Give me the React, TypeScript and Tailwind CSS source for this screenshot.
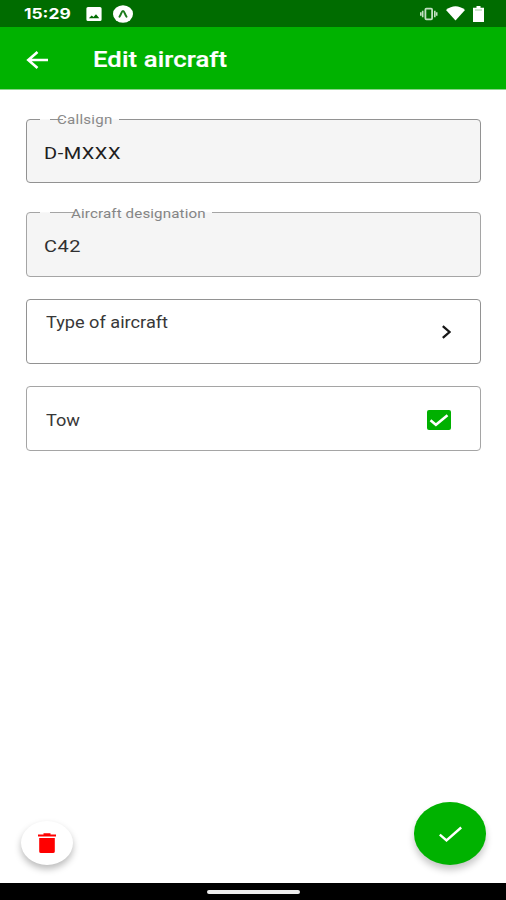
function StatusBar() {
  return (
    <div className="flex h-[27px] shrink-0 items-center justify-between bg-[#006c00] pl-6 pr-[21px] text-white">
      <div className="flex items-center">
        <span className="w-[70px]">
          <span className="inline-block origin-left scale-x-[1.2] font-['Inter',sans-serif] text-[14.5px] leading-[27px] font-bold">15:29</span>
        </span>
        <svg className="ml-[-8px] h-[14px] w-4" viewBox="0 0 16 14">
          <path fillRule="evenodd" d="M2 0h12q1.600 0 1.600 1.500v11q0 1.500-1.600 1.500H2Q.4 14 .4 12.500v-11Q.4 0 2 0M2.800 11.200h10.500L10 7.300 7.500 9.900 5.700 8.400z" fill="currentColor" />
        </svg>
        <svg className="ml-[11px] h-[18px] w-5" viewBox="0 0 20 18">
          <ellipse cx="10" cy="9" rx="10" ry="8.700" fill="currentColor" />
          <path d="M6.500 11.700C8 10 8.600 6 10 6s2 4 3.500 5.700" fill="none" stroke="#1c7a1c" strokeWidth="2" strokeLinecap="round" />
        </svg>
      </div>
      <div className="flex items-center">
        <svg className="h-[14px] w-[19px]" viewBox="0 0 19 14" fill="none" stroke="#c2e0c2">
          <rect x="5.400" y="1.700" width="6.700" height="10.600" rx="1" strokeWidth="1.800" />
          <path d="M2.700 3.800v6.400M.8 5.200v3.600M14.800 3.800v6.400M16.700 5.200v3.600" strokeWidth="1.600" />
        </svg>
        <svg className="ml-[7px] h-[15px] w-[19px]" viewBox="0 0 19 15">
          <path d="M0 4Q9.500-3.500 19 4L9.500 14.500z" fill="currentColor" />
        </svg>
        <svg className="ml-2 mr-px h-4 w-[11px]" viewBox="0 0 11 16">
          <path d="M3.500 0h4v1.800H11V16H0V1.800h3.500z" fill="currentColor" />
          <path d="M2 4h7" stroke="#9bcb9b" />
        </svg>
      </div>
    </div>
  );
}

function Header() {
  return (
    <header className="flex h-[63px] shrink-0 items-center border-b border-[#8bd48b] bg-[#00b200] pl-[26px] pt-[3px] text-white">
      <svg className="h-[18px] w-[22px]" viewBox="0 0 22 18" fill="none" stroke="currentColor" strokeWidth="2.600">
        <path d="M22 9H2.500M11.500 1 2.300 9l9.200 8" />
      </svg>
      <h1 className="-mt-px ml-[45px] origin-left scale-x-[1.165] text-[22px] font-medium tracking-[0.100px] [-webkit-text-stroke:0.200px_white]">Edit aircraft</h1>
    </header>
  );
}

export default function App() {
  return (
    <div className="flex h-[900px] w-[506px] flex-col overflow-hidden bg-white font-['Roboto',sans-serif]">
      <StatusBar />
      <Header />
      <main className="flex flex-1 flex-col pl-[26px] pr-[25px] pt-[28.500px]">
        <section className="relative h-[64px] rounded-[4px] border border-[#929292] bg-[#f5f5f5] pl-[17px] pt-[19px]">
          <span className="absolute -top-px left-[13px] h-px w-[10px] bg-[#f8f8f8]" />
          <span className="absolute -top-px left-[36px] h-px w-[56px] bg-[#f8f8f8]" />
          <span className="absolute -top-[9px] left-[30px] origin-left scale-x-[1.16] text-[13px] leading-[18px] tracking-[0.200px] text-[#8a8a8a]">Callsign</span>
          <p className="w-fit origin-left scale-x-[1.175] text-[17px] leading-7 tracking-[0.450px] text-[#202020]">D-MXXX</p>
        </section>
        <section className="relative mt-[29.500px] h-[65px] rounded-[4px] border border-[#a5a5a5] bg-[#f5f5f5] pl-[17px] pt-[19px]">
          <span className="absolute -top-px left-[13px] h-px w-[10px] bg-[#f8f8f8]" />
          <span className="absolute -top-px left-[47px] h-px w-[138px] bg-[#f8f8f8]" />
          <span className="absolute -top-[8px] left-[44px] origin-left scale-x-[1.165] whitespace-nowrap text-[13px] leading-[18px] tracking-[0.100px] text-[#858585]">Aircraft designation</span>
          <p className="w-fit origin-left scale-x-[1.175] text-[17px] leading-7 tracking-[0.450px] text-[#303030]">C42</p>
        </section>
        <section className="mt-[22px] flex h-[65px] justify-between rounded-[4px] border border-[#929292] pl-[19px] pr-[29px] pt-[10px]">
          <span className="origin-left scale-x-[1.135] text-[16px] leading-[26px] text-[#383838]">Type of aircraft</span>
          <svg className="mt-[15px] h-[14px] w-[9px]" viewBox="0 0 9 14" fill="none" stroke="#181818" strokeWidth="2.300">
            <path d="m.8 1.200 6.700 5.800-6.700 5.800" />
          </svg>
        </section>
        <section className="mt-[22px] flex h-[65px] items-center justify-between rounded-[4px] border border-[#a5a5a5] pl-[19px] pr-[29px] pt-[2px]">
          <span className="mt-[2px] origin-left scale-x-[1.135] text-[16px] leading-[26px] text-[#383838]">Tow</span>
          <svg className="h-5 w-6" viewBox="0 0 24 20">
            <rect width="24" height="20" rx="2" fill="#00b000" />
            <path d="m3.500 10.300 5.400 4.500L20.500 5.200" fill="none" stroke="white" strokeWidth="2.500" />
          </svg>
        </section>
      </main>
      <div className="flex shrink-0 items-end justify-between pb-[18px] pl-[21px] pr-[20px]">
        <button aria-label="Delete" className="flex h-[44px] w-[52px] items-center justify-center rounded-[50%] bg-white shadow-[0_4px_7px_rgba(0,0,0,0.270)]">
          <svg className="h-5 w-[18px]" viewBox="0 0 18 20">
            <path fill="#ff0000" d="M5.500.2h7v1.300H18v2H0v-2h5.500zM1.200 5h15.600v13.500q0 1.500-1.800 1.500H3q-1.800 0-1.800-1.500z" />
          </svg>
        </button>
        <button aria-label="Save" className="flex h-[62.500px] w-[72px] items-center justify-center rounded-[50%] bg-[#00b200] shadow-[0_5px_7px_rgba(0,0,0,0.220)]">
          <svg className="mt-[2px] h-4 w-[23px]" viewBox="0 0 23 16" fill="none" stroke="white" strokeWidth="2.400">
            <path d="m.8 8.600 6.700 5.800L22.200 1.500" />
          </svg>
        </button>
      </div>
      <footer className="flex h-[17.500px] shrink-0 items-center justify-center bg-black pt-px">
        <div className="h-1 w-[93px] rounded-full bg-[#eeeeee]" />
      </footer>
    </div>
  );
}
